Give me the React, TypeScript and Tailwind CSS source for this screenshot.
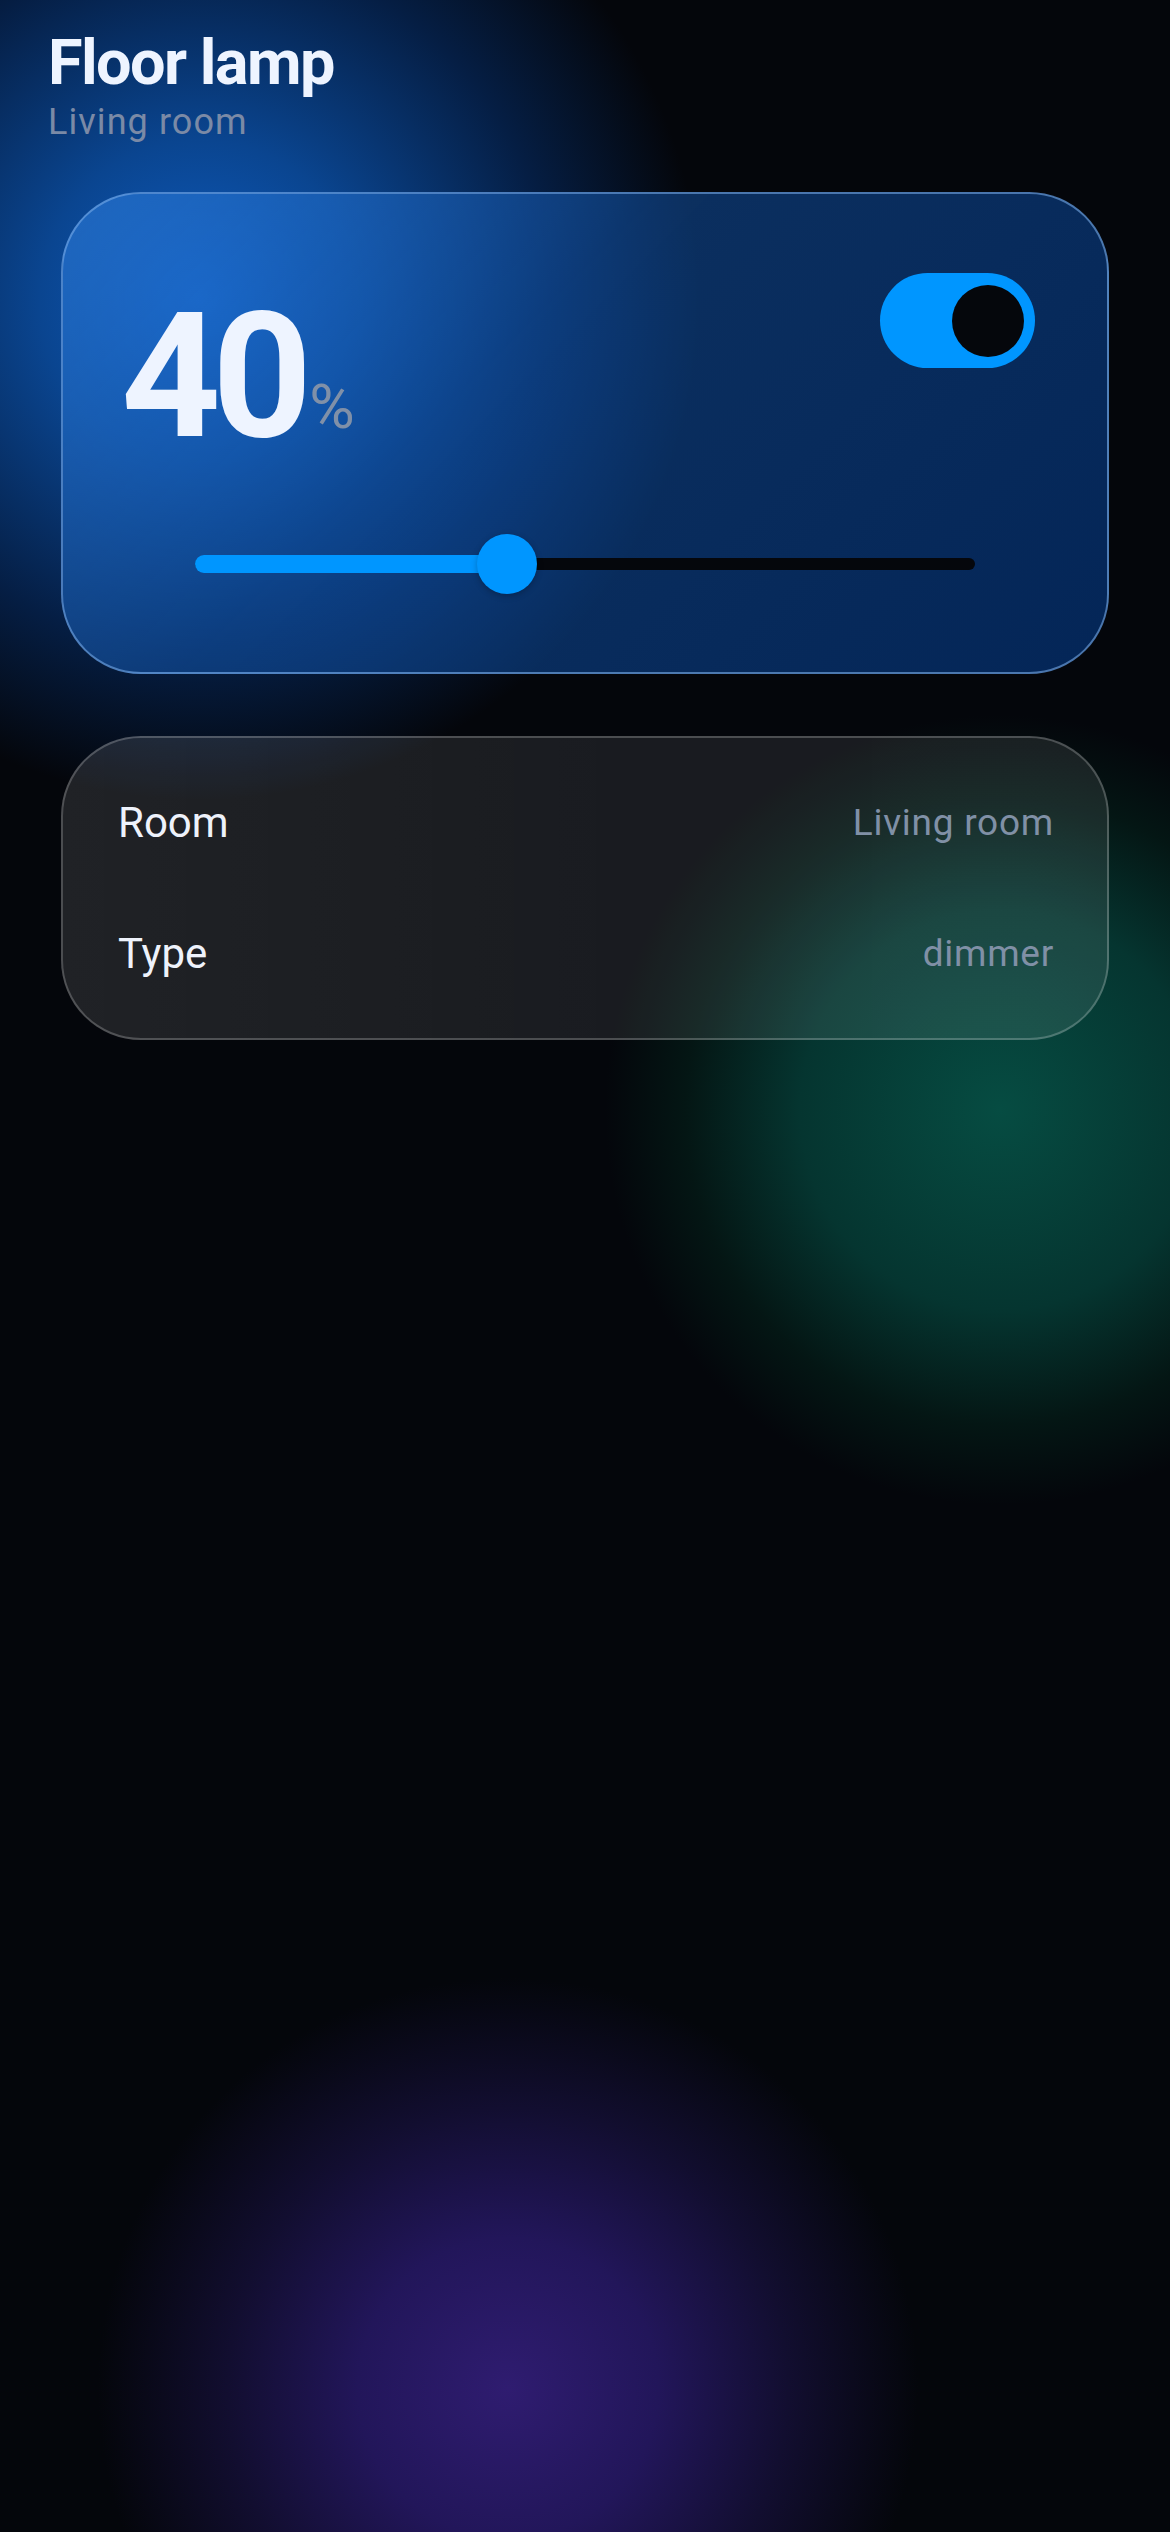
import React from "react";

export default function App() {
  const value = 40;
  return (
    <div className="min-h-screen w-full bg-[#04060b] bg-[radial-gradient(circle_at_200px_300px,#0e5cc0_0px,#0a4590_160px,#051e44_350px,rgba(4,6,11,0)_500px),radial-gradient(circle_at_1000px_1110px,#064c42_0px,#053530_200px,#041614_315px,rgba(4,6,11,0)_395px),radial-gradient(circle_at_508px_2388px,#2f1c70_0px,#22165a_150px,#120e30_280px,rgba(4,6,11,0)_410px)] font-[Roboto,sans-serif] overflow-hidden">
      <header className="pl-[48px] pt-[31px]">
        <h1 className="text-[63px] font-bold leading-none tracking-[-0.025em] text-[#eef4ff]">Floor lamp</h1>
        <p className="mt-[10px] text-[36px] leading-none tracking-[0.03em] text-[#7b8aa6]">Living room</p>
      </header>

      <main className="px-[61px] mt-[52px] flex flex-col gap-[62px]">
        <section className="rounded-[80px] border-2 border-[rgba(120,170,230,0.6)] bg-[linear-gradient(135deg,rgba(45,125,220,0.6)_0%,rgba(20,90,180,0.5)_40%,rgba(5,65,150,0.55)_100%)] pt-[79px] pb-[78px]">
          <div className="flex items-start justify-between pl-[58px] pr-[72px]">
            <div className="mt-[17px] flex items-end">
              <span className="text-[174px] font-bold leading-none tracking-[-0.05em] text-[#eef4ff]">{value}</span>
              <span className="ml-[6px] mb-[26px] text-[62px] leading-none text-[#8090a8]">%</span>
            </div>
            <div className="flex h-[95px] w-[155px] items-center justify-end rounded-full bg-[#0096ff] pr-[11px]">
              <div className="h-[72px] w-[72px] rounded-full bg-[#05070c]" />
            </div>
          </div>
          <div className="mt-[70px] px-[132px]">
            <div className="relative flex h-[60px] items-center">
              <div className="h-[12px] w-full rounded-full bg-[#05070c]" />
              <div
                className="absolute left-0 top-1/2 h-[18px] -translate-y-1/2 rounded-full bg-[#0096ff]"
                style={{ width: `${value}%` }}
              />
              <div
                className="absolute top-0 h-[60px] w-[60px] -translate-x-1/2 rounded-full bg-[#0096ff] shadow-[0_2px_6px_rgba(0,0,0,0.25)]"
                style={{ left: `${value}%` }}
              />
            </div>
          </div>
        </section>

        <section className="rounded-[80px] border-2 border-white/[0.22] bg-[linear-gradient(90deg,rgba(255,255,255,0.115)_0%,rgba(255,255,255,0.085)_55%,rgba(255,255,255,0.09)_100%)] pl-[55px] pr-[53px] py-[19px]">
          <div className="flex h-[131px] items-center justify-between">
            <span className="text-[42px] leading-none text-[#eef2fb]">Room</span>
            <span className="text-[37px] leading-none tracking-[0.02em] text-[#8090a6]">Living room</span>
          </div>
          <div className="flex h-[131px] items-center justify-between">
            <span className="text-[42px] leading-none text-[#eef2fb]">Type</span>
            <span className="text-[37px] leading-none tracking-[0.02em] text-[#8090a6]">dimmer</span>
          </div>
        </section>
      </main>
    </div>
  );
}
